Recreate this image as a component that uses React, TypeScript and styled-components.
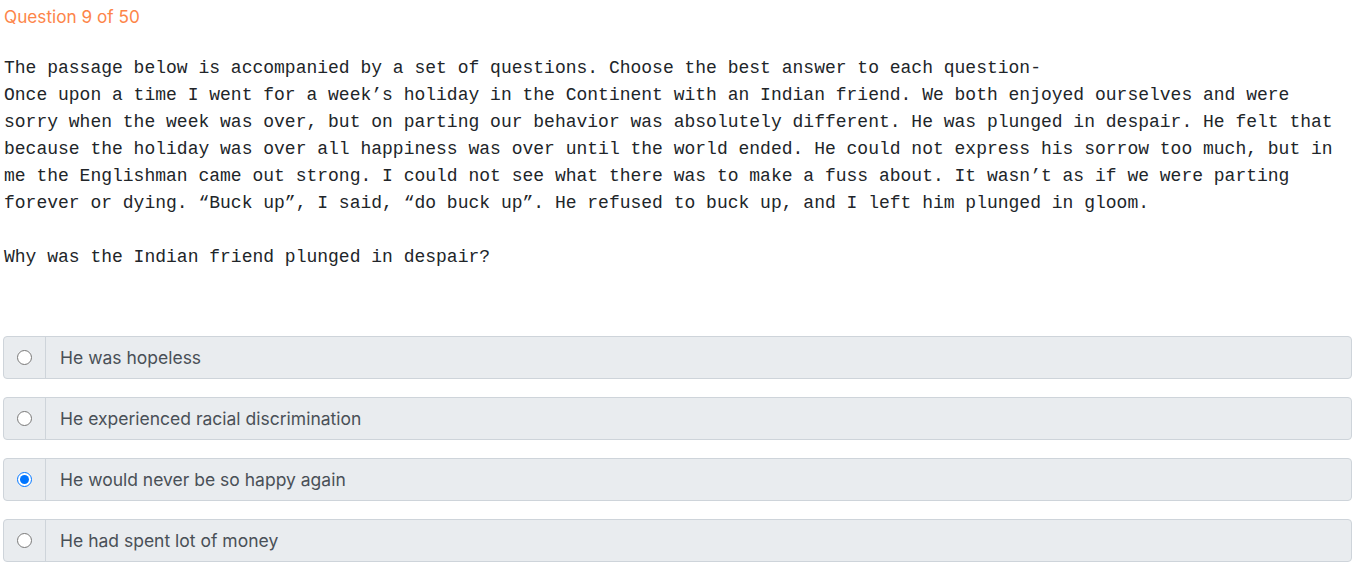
import styled, { createGlobalStyle } from "styled-components";

const GlobalStyle = createGlobalStyle`
  html, body {
    margin: 0;
    padding: 0;
    background: #fff;
  }
`;

const options = [
  "He was hopeless",
  "He experienced racial discrimination",
  "He would never be so happy again",
  "He had spent lot of money",
];

const passage =
  "Once upon a time I went for a week’s holiday in the Continent with an Indian friend. We both enjoyed ourselves and were sorry when the week was over, but on parting our behavior was absolutely different. He was plunged in despair. He felt that because the holiday was over all happiness was over until the world ended. He could not express his sorrow too much, but in me the Englishman came out strong. I could not see what there was to make a fuss about. It wasn’t as if we were parting forever or dying. “Buck up”, I said, “do buck up”. He refused to buck up, and I left him plunged in gloom.";

export default function App() {
  const selected = 2;
  return (
    <>
      <GlobalStyle />
      <Page>
        <Counter>Question 9 of 50</Counter>
        <Passage>
          The passage below is accompanied by a set of questions. Choose the best answer to each question-
          <br />
          {passage}
          <br />
          <br />
          Why was the Indian friend plunged in despair?
        </Passage>
        <OptionList>
          {options.map((text, idx) => (
            <Option key={idx}>
              <RadioCell>
                <input type="radio" name="answer" checked={idx === selected} readOnly />
              </RadioCell>
              <OptionText>{text}</OptionText>
            </Option>
          ))}
        </OptionList>
      </Page>
    </>
  );
}

const Page = styled.div`
  padding: 5px 8px 0 3px;
`;

const Counter = styled.div`
  font-family: Inter, "Noto Sans", sans-serif;
  font-size: 17.2px;
  line-height: 24px;
  color: #fd8549;
  padding-left: 1px;
`;

const Passage = styled.div`
  margin-top: 26px;
  padding-left: 1px;
  width: 1340px;
  font-family: "Liberation Mono", "DejaVu Sans Mono", monospace;
  font-size: 18px;
  line-height: 27px;
  color: #212529;
`;

const OptionList = styled.div`
  margin-top: 65px;
  display: flex;
  flex-direction: column;
  gap: 18px;
`;

const Option = styled.label`
  display: flex;
  height: 43px;
  box-sizing: border-box;
  border: 1px solid #ced4da;
  border-radius: 4px;
  background: #e9ecef;
  overflow: hidden;
`;

const RadioCell = styled.div`
  width: 41px;
  flex: none;
  display: flex;
  align-items: center;
  justify-content: center;
  border-right: 1px solid #ced4da;

  input {
    margin: 0;
    width: 15px;
    height: 15px;
  }
`;

const OptionText = styled.div`
  flex: 1;
  display: flex;
  align-items: center;
  padding-left: 14px;
  font-family: Inter, "Noto Sans", sans-serif;
  font-size: 17.5px;
  color: #495057;
`;
